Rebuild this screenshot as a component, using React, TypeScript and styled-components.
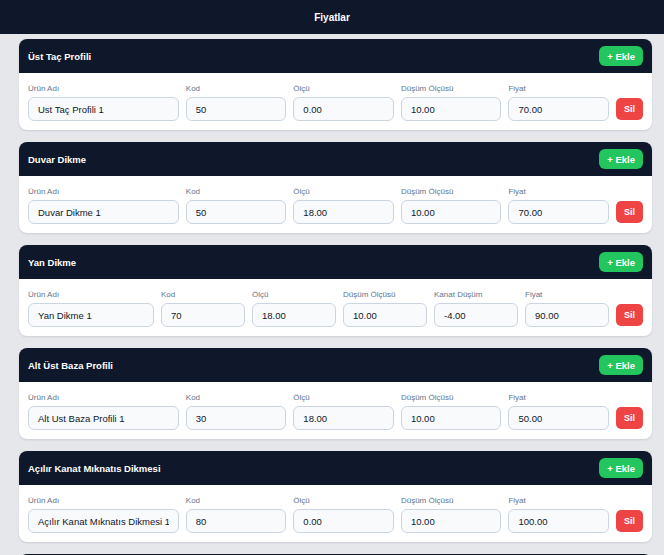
import React from 'react';
import styled, { createGlobalStyle } from 'styled-components';

interface Field {
    label: string;
    value: string;
    wide?: boolean;
}

interface Section {
    title: string;
    fields: Field[];
}

const row = (name: string, kod: string, olcu: string, dusum: string, fiyat: string, kanat?: string): Field[] => {
    const list: Field[] = [
        { label: 'Ürün Adı', value: name, wide: true },
        { label: 'Kod', value: kod },
        { label: 'Ölçü', value: olcu },
        { label: 'Düşüm Ölçüsü', value: dusum },
    ];
    if (kanat !== undefined) list.push({ label: 'Kanat Düşüm', value: kanat });
    list.push({ label: 'Fiyat', value: fiyat });
    return list;
};

const sections: Section[] = [
    { title: 'Üst Taç Profili', fields: row('Ust Taç Profili 1', '50', '0.00', '10.00', '70.00') },
    { title: 'Duvar Dikme', fields: row('Duvar Dikme 1', '50', '18.00', '10.00', '70.00') },
    { title: 'Yan Dikme', fields: row('Yan Dikme 1', '70', '18.00', '10.00', '90.00', '-4.00') },
    { title: 'Alt Üst Baza Profili', fields: row('Alt Ust Baza Profili 1', '30', '18.00', '10.00', '50.00') },
    { title: 'Açılır Kanat Mıknatıs Dikmesi', fields: row('Açılır Kanat Mıknatıs Dikmesi 1', '80', '0.00', '10.00', '100.00') },
];

const App: React.FC = () => {
    return (
        <>
            <GlobalStyle />
            <TopBar>Fiyatlar</TopBar>
            <Main>
                {sections.map((s) => (
                    <Card key={s.title}>
                        <CardHeader>
                            <CardTitle>{s.title}</CardTitle>
                            <AddButton>+ Ekle</AddButton>
                        </CardHeader>
                        <CardBody>
                            <FieldRow cols={s.fields.length}>
                                {s.fields.map((f) => (
                                    <FieldBox key={f.label}>
                                        <Label>{f.label}</Label>
                                        <Input defaultValue={f.value} />
                                    </FieldBox>
                                ))}
                                <DeleteButton>Sil</DeleteButton>
                            </FieldRow>
                        </CardBody>
                    </Card>
                ))}
                {/* next section, scrolled below the fold */}
                <Card>
                    <CardHeader />
                </Card>
            </Main>
        </>
    );
};

export default App;

const GlobalStyle = createGlobalStyle`
    html, body {
        margin: 0;
        padding: 0;
        height: 555px;
        overflow: hidden;
        background: #e5e7eb;
        font-family: 'Liberation Sans', Arial, sans-serif;
    }
    * {
        box-sizing: border-box;
    }
`;

const TopBar = styled.header`
    height: 34px;
    display: flex;
    align-items: center;
    justify-content: center;
    background: #0f172a;
    color: #ffffff;
    font-size: 10px;
    font-weight: bold;
`;

const Main = styled.main`
    display: flex;
    flex-direction: column;
    gap: 12px;
    padding: 5px 12px 0 19px;
`;

const Card = styled.section`
    background: #ffffff;
    border-radius: 8px;
    overflow: hidden;
    box-shadow: 0 1px 2px rgba(15, 23, 42, 0.12);
`;

const CardHeader = styled.div`
    height: 34px;
    display: flex;
    align-items: center;
    justify-content: space-between;
    padding: 0 9px;
    background: #0f172a;
`;

const CardTitle = styled.h3`
    margin: 0;
    color: #ffffff;
    font-size: 9.5px;
    font-weight: bold;
`;

const AddButton = styled.button`
    height: 20px;
    padding: 0 8px;
    border: none;
    border-radius: 6px;
    background: #22c55e;
    color: #ffffff;
    font-family: inherit;
    font-size: 9.5px;
    font-weight: bold;
    cursor: pointer;
`;

const CardBody = styled.div`
    padding: 11px 9px 9px 9px;
    height: 57px;
`;

const FieldRow = styled.div<{ cols: number }>`
    display: grid;
    grid-template-columns: 1.5fr repeat(${({ cols }) => cols - 1}, 1fr) 27px;
    column-gap: 7px;
    align-items: end;
`;

const FieldBox = styled.label`
    display: flex;
    flex-direction: column;
    gap: 4px;
    min-width: 0;
`;

const Label = styled.span`
    color: #64748b;
    font-size: 8px;
    line-height: 9px;
`;

const Input = styled.input`
    width: 100%;
    height: 24px;
    padding: 0 9px;
    border: 1px solid #cbd5e1;
    border-radius: 6px;
    background: #f8fafc;
    color: #0f172a;
    font-family: inherit;
    font-size: 9.5px;
    outline: none;
`;

const DeleteButton = styled.button`
    height: 22px;
    margin-bottom: 1px;
    padding: 0;
    border: none;
    border-radius: 5px;
    background: #ef4444;
    color: #ffffff;
    font-family: inherit;
    font-size: 9px;
    font-weight: bold;
    cursor: pointer;
`;
